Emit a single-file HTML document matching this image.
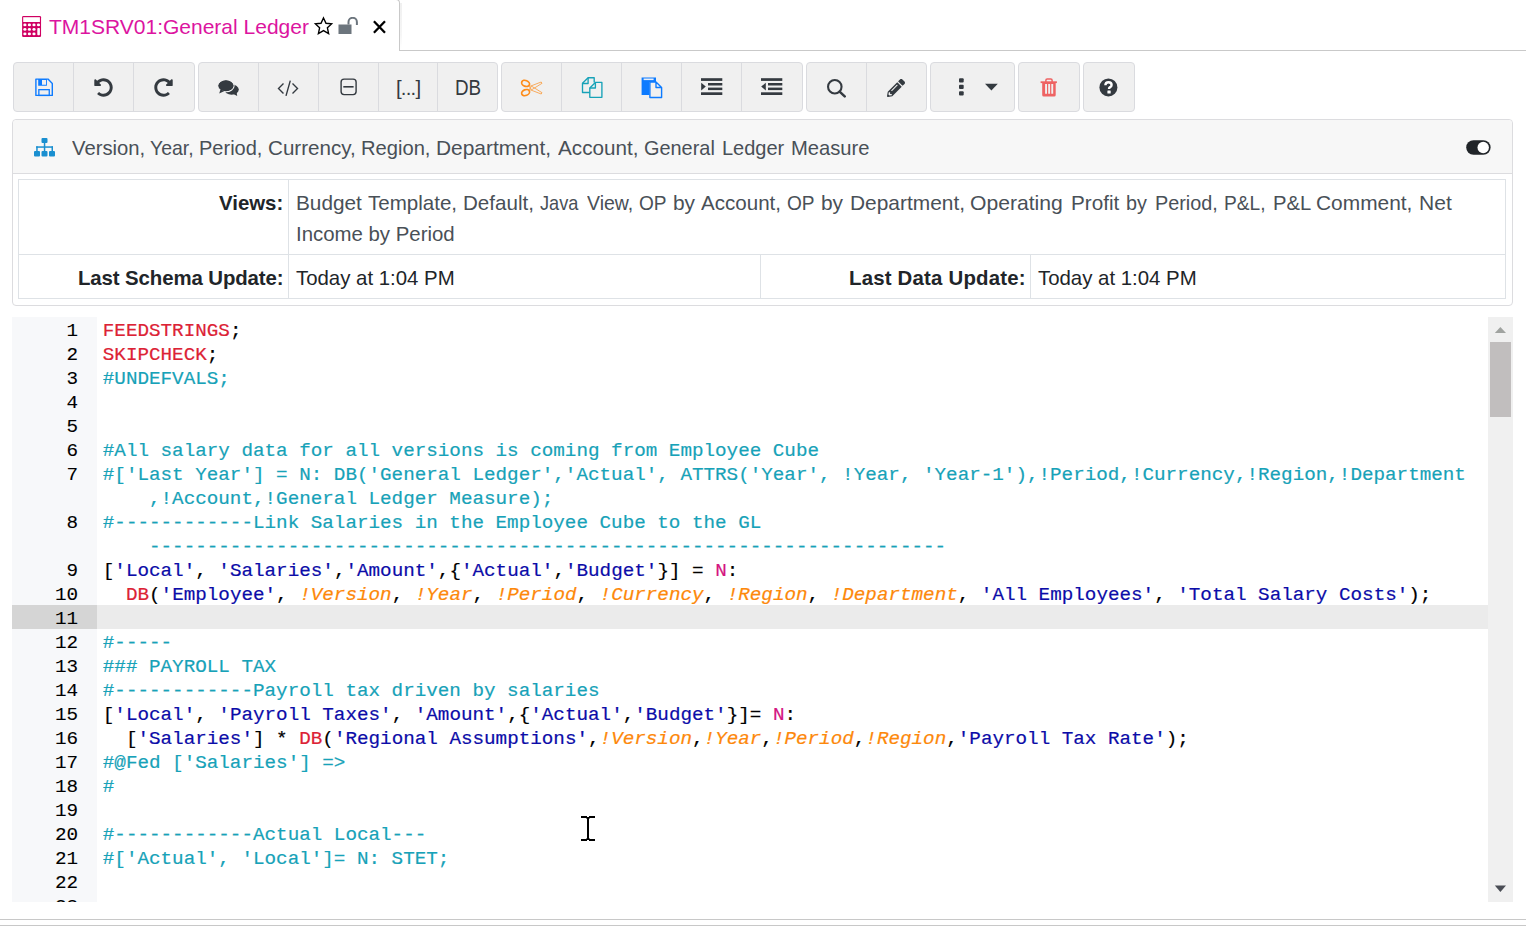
<!DOCTYPE html>
<html><head><meta charset="utf-8">
<style>
html,body{margin:0;padding:0;background:#fff;}
body{width:1526px;height:926px;overflow:hidden;position:relative;font-family:"Liberation Sans",sans-serif;}
.a{position:absolute;}
.t{position:absolute;white-space:pre;line-height:24px;}
.hw{font-size:20.4px;color:#495057;transform-origin:0 0;}
/* tab */
#tab{left:-10px;top:-1px;width:408px;height:51px;border:1px solid #c9c9c9;border-bottom:none;border-radius:0 4px 0 0;background:#fff;}
#tabline{left:399px;top:50px;width:1127px;height:1px;background:#c9c9c9;}
/* toolbar */
.grp{position:absolute;top:62px;height:48px;border:1px solid #dadbdf;border-radius:4px;background:#f0f0f0;}
.sep{position:absolute;top:63px;width:1px;height:48px;background:#dadbdf;}
/* panel */
#panel{left:12px;top:119px;width:1499px;height:185px;border:1px solid #dcdcdf;border-radius:4px;background:#fff;}
#phead{left:13px;top:120px;width:1499px;height:53px;background:#f7f7f7;border-bottom:1px solid #dcdcdf;border-radius:4px 4px 0 0;}
.tl{position:absolute;background:#dee2e6;}
/* editor */
#gutter{left:12px;top:317px;width:85px;height:585px;background:#f7f8fa;}
#hl{left:97px;top:605px;width:1391px;height:24px;background:#ebebeb;}
#hlg{left:12px;top:605px;width:85px;height:24px;background:#d5d5d5;}
#code{-webkit-text-stroke:0.2px currentColor;left:102.8px;top:319px;width:1385px;height:583px;overflow:hidden;font-family:"Liberation Mono",monospace;font-size:19.25px;line-height:24px;white-space:pre;color:#000;}
#nums{-webkit-text-stroke:0.1px currentColor;left:12px;top:319px;width:66px;height:583px;overflow:hidden;font-family:"Liberation Mono",monospace;font-size:19.25px;line-height:24px;white-space:pre;color:#000;text-align:right;}
.k{color:#dc2235;}
.c{color:#17a2b8;}
.s{color:#0c0ca8;}
.v{color:#fd880a;font-style:italic;}
.n{color:#d4157f;}
#sb{left:1488px;top:317px;width:25px;height:585px;background:#f0f0f0;}
#thumb{left:1490px;top:342px;width:21px;height:75px;background:#c1bebe;}
#bot1{left:0;top:919px;width:1526px;height:1px;background:#c8c8c8;}
#bot2{left:0;top:925px;width:1526px;height:1px;background:#c8c8c8;}
</style></head><body>

<!-- TAB -->
<div id="tab" class="a"></div>
<div id="tabline" class="a"></div>
<div class="a" style="left:400px;top:3px;width:2px;height:46px;background:linear-gradient(#f0f0f0,#f6f6f6 70%,#fff);"></div>
<svg class="a" style="left:19px;top:13px" width="26" height="26" viewBox="0 0 26 26">
  <rect x="3.1" y="2.95" width="18.95" height="20.95" rx="1.2" fill="#cf0062"/>
  <rect x="4.2" y="4.2" width="16.7" height="4.8" fill="#fff"/>
  <g fill="#fff"><ellipse cx="5.9" cy="11.9" rx="1.6" ry="1.45"/><ellipse cx="10.4" cy="11.9" rx="1.6" ry="1.45"/><ellipse cx="15.0" cy="11.9" rx="1.6" ry="1.45"/><ellipse cx="19.5" cy="11.9" rx="1.6" ry="1.45"/><ellipse cx="5.9" cy="16.4" rx="1.6" ry="1.45"/><ellipse cx="10.4" cy="16.4" rx="1.6" ry="1.45"/><ellipse cx="15.0" cy="16.4" rx="1.6" ry="1.45"/><ellipse cx="5.9" cy="20.9" rx="1.6" ry="1.45"/><ellipse cx="10.4" cy="20.9" rx="1.6" ry="1.45"/><ellipse cx="15.0" cy="20.9" rx="1.6" ry="1.45"/><rect x="18.3" y="15" width="2.6" height="7.2" rx="0.8"/></g>
</svg>
<div class="t" style="left:49px;top:14.7px;font-size:21px;color:#dc14a0;">TM1SRV01:General Ledger</div>
<svg class="a" style="left:313px;top:16px" width="21" height="20" viewBox="0 0 21 20">
  <path d="M10.5 2 L13 7.3 L18.6 7.9 L14.4 11.8 L15.6 17.5 L10.5 14.6 L5.4 17.5 L6.6 11.8 L2.4 7.9 L8 7.3 Z" fill="none" stroke="#000" stroke-width="1.4" stroke-linejoin="miter"/>
</svg>
<svg class="a" style="left:338px;top:17px" width="21" height="18" viewBox="0 0 21 18">
  <rect x="0.5" y="7.5" width="13" height="9.5" fill="#6c757d"/>
  <path d="M10.5 7.5 V5 A4.2 4.2 0 0 1 18.9 5 V8" fill="none" stroke="#6c757d" stroke-width="2"/>
</svg>
<svg class="a" style="left:372px;top:20px" width="15" height="15" viewBox="0 0 15 15">
  <path d="M1.9 1.3 L13 12.8 M13 1.3 L1.9 12.8" stroke="#000" stroke-width="2.3" stroke-linecap="butt"/>
</svg>

<!-- TOOLBAR -->
<div class="grp" style="left:13px;width:180px;"></div>
<div class="sep" style="left:73px"></div><div class="sep" style="left:133px"></div>
<div class="grp" style="left:198px;width:298px;"></div>
<div class="sep" style="left:258px"></div><div class="sep" style="left:318px"></div><div class="sep" style="left:378px"></div><div class="sep" style="left:437px"></div>
<div class="grp" style="left:501px;width:300px;"></div>
<div class="sep" style="left:561px"></div><div class="sep" style="left:621px"></div><div class="sep" style="left:681px"></div><div class="sep" style="left:741px"></div>
<div class="grp" style="left:806px;width:119px;"></div>
<div class="sep" style="left:866px"></div>
<div class="grp" style="left:930px;width:83px;"></div>
<div class="grp" style="left:1018px;width:60px;"></div>
<div class="grp" style="left:1083px;width:50px;"></div>

<!-- icons -->
<!-- save -->
<svg class="a" style="left:32px;top:75px" width="24" height="24" viewBox="0 0 24 24">
  <path d="M3.9 4.1 H16 L20.3 8.4 V20.4 H3.9 Z" fill="none" stroke="#0d7bff" stroke-width="1.4" stroke-linejoin="round"/>
  <path d="M6.2 4.1 H14.9 V10.8 H6.2 Z M10 4.9 V9.7 H14 V4.9 Z" fill="#0d7bff" fill-rule="evenodd"/>
  <rect x="6.85" y="14.65" width="10.4" height="5.8" fill="none" stroke="#0d7bff" stroke-width="1.3"/>
</svg>
<!-- undo -->
<svg class="a" style="left:94px;top:78px" width="19" height="19" viewBox="0 0 512 512">
  <path fill="#343a40" d="M255.545 8c-66.269.119-126.438 26.233-170.86 68.685L48.971 40.971C33.851 25.851 8 36.559 8 57.941V192c0 13.255 10.745 24 24 24h134.059c21.382 0 32.09-25.851 16.971-40.971l-41.75-41.75c30.864-28.899 70.801-44.907 113.23-45.273 92.398-.798 170.283 73.977 169.484 169.442C423.236 348.009 349.816 424 256 424c-41.127 0-79.997-14.678-110.63-41.556-4.743-4.161-11.906-3.908-16.368.553L89.34 422.659c-4.872 4.872-4.631 12.815.482 17.433C133.798 479.813 192.074 504 256 504c136.966 0 247.999-111.033 248-247.998C504.001 119.193 392.354 7.755 255.545 8z"/>
</svg>
<!-- redo -->
<svg class="a" style="left:154px;top:78px" width="19" height="19" viewBox="0 0 512 512">
  <path fill="#343a40" transform="translate(512 0) scale(-1 1)" d="M255.545 8c-66.269.119-126.438 26.233-170.86 68.685L48.971 40.971C33.851 25.851 8 36.559 8 57.941V192c0 13.255 10.745 24 24 24h134.059c21.382 0 32.09-25.851 16.971-40.971l-41.75-41.75c30.864-28.899 70.801-44.907 113.23-45.273 92.398-.798 170.283 73.977 169.484 169.442C423.236 348.009 349.816 424 256 424c-41.127 0-79.997-14.678-110.63-41.556-4.743-4.161-11.906-3.908-16.368.553L89.34 422.659c-4.872 4.872-4.631 12.815.482 17.433C133.798 479.813 192.074 504 256 504c136.966 0 247.999-111.033 248-247.998C504.001 119.193 392.354 7.755 255.545 8z"/>
</svg>
<!-- comments -->
<svg class="a" style="left:214px;top:76px" width="28" height="24" viewBox="0 0 28 24">
  <g fill="#343a40">
    <ellipse cx="17.6" cy="13.6" rx="7.2" ry="5.1"/>
    <path d="M18.5 17.5 L23.2 20.1 L22.6 16 Z"/>
  </g>
  <ellipse cx="11.95" cy="9.75" rx="8.05" ry="5.85" fill="#343a40" stroke="#f0f0f0" stroke-width="1.3"/>
  <path d="M6.5 13.5 L5.2 17.4 L10.5 15 Z" fill="#343a40"/>
  <ellipse cx="11.95" cy="9.75" rx="7.6" ry="5.4" fill="#343a40"/>
</svg>
<!-- code -->
<svg class="a" style="left:277px;top:80px" width="22" height="17" viewBox="0 0 22 17">
  <path d="M6.5 3.5 L1.5 8.5 L6.5 13.5 M15.5 3.5 L20.5 8.5 L15.5 13.5 M13.3 0.6 L9 15.9" fill="none" stroke="#343a40" stroke-width="1.4"/>
</svg>
<!-- minus square -->
<svg class="a" style="left:340px;top:78px" width="18" height="18" viewBox="0 0 18 18">
  <rect x="1.1" y="1.1" width="15" height="15.5" rx="3" fill="none" stroke="#343a40" stroke-width="1.4"/>
  <rect x="3.3" y="8" width="10.3" height="1.6" fill="#343a40"/>
</svg>
<div class="t" style="left:396px;top:76px;font-size:20.4px;color:#343a40;letter-spacing:-0.8px;">[...]</div>
<div class="t" style="left:455px;top:76px;font-size:21.4px;color:#343a40;transform:scaleX(0.88);transform-origin:0 0;">DB</div>
<!-- scissors -->
<svg class="a" style="left:516px;top:74px" width="30" height="26" viewBox="0 0 30 26">
  <g fill="none" stroke="#fd8c1a" stroke-width="1.7">
    <ellipse cx="9.6" cy="9.4" rx="4.1" ry="2.9" transform="rotate(22 9.6 9.4)"/>
    <ellipse cx="9.6" cy="18.6" rx="4.1" ry="2.9" transform="rotate(-22 9.6 18.6)"/>
  </g>
  <g fill="none" stroke="#fd8c1a" stroke-width="0.8" stroke-linejoin="round" opacity="0.85">
    <path d="M13.3 12.6 L25.2 8 L26 9.3 L15.6 15.8 Z"/>
    <path d="M13.3 15.4 L25.2 20 L26 18.7 L15.6 12.2 Z"/>
  </g>
</svg>
<!-- copy -->
<svg class="a" style="left:578px;top:74px" width="28" height="26" viewBox="0 0 28 26">
  <g fill="none" stroke="#17a2b8" stroke-width="1.35" stroke-linejoin="round">
    <path d="M11.8 18.5 H4.5 V9.3 L10.1 3.7 H16.2 V8.4"/>
    <path d="M10.1 3.7 V9.5 H4.5"/>
    <path d="M16.6 8.4 H23.9 V23.3 H11.8 V14 L17.4 8.4"/>
    <path d="M17.4 8.6 V14 H11.8"/>
  </g>
</svg>
<!-- paste -->
<svg class="a" style="left:641px;top:77px" width="22" height="22" viewBox="0 0 22 22">
  <path d="M0.6 0.5 H15 V5 H8.5 V18 H0.6 Z" fill="#0d7bff"/>
  <rect x="2.6" y="1.5" width="10" height="1.6" fill="#e8eef8"/>
  <path d="M8.9 5 H15 L20.6 10.5 V20.5 H8.9 Z M15 5 V10.5 H20.6" fill="#f0f0f0" stroke="#0d7bff" stroke-width="1.4" stroke-linejoin="round"/>
</svg>
<!-- indent -->
<svg class="a" style="left:701px;top:78px" width="22" height="18" viewBox="0 0 22 18">
  <g fill="#343a40"><rect x="0" y="0.2" width="21.3" height="2.7"/><rect x="7" y="5" width="14.3" height="2.5"/><rect x="7" y="9.6" width="14.3" height="2.5"/><rect x="0" y="14.3" width="21.3" height="2.7"/>
  <path d="M0.2 4.8 L4.8 8.6 L0.2 12.4 Z"/></g>
</svg>
<!-- outdent -->
<svg class="a" style="left:761px;top:78px" width="22" height="18" viewBox="0 0 22 18">
  <g fill="#343a40"><rect x="0" y="0.2" width="21.3" height="2.7"/><rect x="7" y="5" width="14.3" height="2.5"/><rect x="7" y="9.6" width="14.3" height="2.5"/><rect x="0" y="14.3" width="21.3" height="2.7"/>
  <path d="M4.8 4.8 L0.2 8.6 L4.8 12.4 Z"/></g>
</svg>
<!-- search -->
<svg class="a" style="left:826px;top:78px" width="21" height="20" viewBox="0 0 21 20">
  <circle cx="8.8" cy="8.8" r="6.75" fill="none" stroke="#343a40" stroke-width="2.1"/>
  <path d="M13.6 13.6 L18.7 18.4" stroke="#343a40" stroke-width="2.5" stroke-linecap="round"/>
</svg>
<!-- pencil -->
<svg class="a" style="left:887px;top:79px" width="18" height="18" viewBox="0 0 512 512">
  <path fill="#343a40" d="M497.9 142.1l-46.1 46.1c-4.7 4.7-12.3 4.7-17 0l-111-111c-4.7-4.7-4.7-12.3 0-17l46.1-46.1c18.7-18.7 49.1-18.7 67.9 0l60.1 60.1c18.8 18.7 18.8 49.1 0 67.9zM284.2 99.8L21.6 362.4.4 483.9c-2.9 16.4 11.4 30.6 27.8 27.8l121.5-21.3 262.6-262.6c4.7-4.7 4.7-12.3 0-17l-111-111c-4.8-4.7-12.4-4.7-17.1 0zM124.1 339.9c-5.5-5.5-5.5-14.3 0-19.8l154-154c5.5-5.5 14.3-5.5 19.8 0s5.5 14.3 0 19.8l-154 154c-5.5 5.5-14.3 5.5-19.8 0zM88 424h48v36.3l-64.5 11.3-31.1-31.1L51.7 376H88v48z"/>
</svg>
<!-- ellipsis v -->
<svg class="a" style="left:958px;top:78px" width="7" height="18" viewBox="0 0 7 18">
  <g fill="#343a40"><rect x="1" y="0.3" width="4.7" height="4.3" rx="1"/><rect x="1" y="6.8" width="4.7" height="4.3" rx="1"/><rect x="1" y="13.2" width="4.7" height="4.3" rx="1"/></g>
</svg>
<svg class="a" style="left:985px;top:83px" width="13" height="8" viewBox="0 0 13 8">
  <path d="M0 0.8 H12.8 L6.4 7.4 Z" fill="#343a40"/>
</svg>
<!-- trash -->
<svg class="a" style="left:1036px;top:74px" width="26" height="26" viewBox="0 0 26 26">
  <path d="M9.9 8.2 V6.2 Q9.9 4.9 11.2 4.9 H14.8 Q16.1 4.9 16.1 6.2 V8.2" fill="none" stroke="#ee6363" stroke-width="1.5"/>
  <rect x="4.6" y="7.3" width="16.3" height="1.8" fill="#ee6363"/>
  <path fill="#ee6363" fill-rule="evenodd" d="M6.2 9 H19.7 V21 Q19.7 22.5 18.2 22.5 H7.7 Q6.2 22.5 6.2 21 Z M9.1 10.1 V19.7 H11 V10.1 Z M12.2 10.1 V19.7 H14.1 V10.1 Z M15.3 10.1 V19.7 H17.2 V10.1 Z"/>
</svg>
<!-- help -->
<svg class="a" style="left:1099px;top:78px" width="19" height="19" viewBox="0 0 19 19">
  <circle cx="9.4" cy="9.4" r="9" fill="#343a40"/>
  <path d="M6.4 7.3 Q6.4 4.2 9.5 4.2 Q12.6 4.2 12.6 6.9 Q12.6 8.5 10.8 9.4 Q10.1 9.8 10.1 10.6 V11" fill="none" stroke="#fff" stroke-width="2.4" stroke-linejoin="round"/>
  <rect x="8.4" y="12.6" width="3.3" height="2.9" rx="0.5" fill="#fff"/>
</svg>

<!-- PANEL -->
<div id="panel" class="a"></div>
<div id="phead" class="a"></div>
<svg class="a" style="left:34px;top:138px" width="22" height="19" viewBox="0 0 22 19">
  <g fill="#1a8fd0">
    <rect x="7.5" y="0" width="6" height="5" rx="1"/>
    <rect x="0" y="13" width="6" height="5.5" rx="1"/><rect x="7.5" y="13" width="6" height="5.5" rx="1"/><rect x="15" y="13" width="6" height="5.5" rx="1"/>
    <rect x="9.8" y="4" width="1.5" height="9.5"/>
    <rect x="2.2" y="8.3" width="16.8" height="1.5"/>
    <rect x="2.2" y="8.3" width="1.5" height="5.2"/><rect x="17.5" y="8.3" width="1.5" height="5.2"/>
  </g>
</svg>
<div class="t hw" style="left:71.5px;top:136px;transform:scaleX(0.994)">Version,</div>
<div class="t hw" style="left:149.9px;top:136px;transform:scaleX(0.955)">Year,</div>
<div class="t hw" style="left:199.3px;top:136px;transform:scaleX(0.981)">Period,</div>
<div class="t hw" style="left:268.0px;top:136px;transform:scaleX(1.011)">Currency,</div>
<div class="t hw" style="left:360.8px;top:136px;transform:scaleX(0.988)">Region,</div>
<div class="t hw" style="left:436.3px;top:136px;transform:scaleX(1.025)">Department,</div>
<div class="t hw" style="left:557.5px;top:136px;transform:scaleX(1.014)">Account,</div>
<div class="t hw" style="left:643.5px;top:136px;transform:scaleX(0.976)">General</div>
<div class="t hw" style="left:721.7px;top:136px;transform:scaleX(0.981)">Ledger</div>
<div class="t hw" style="left:790.9px;top:136px;transform:scaleX(0.990)">Measure</div>
<svg class="a" style="left:1466px;top:140px" width="25" height="15" viewBox="0 0 25 15">
  <rect x="0.2" y="0.2" width="24.4" height="14.6" rx="7.3" fill="#212529"/>
  <circle cx="17.2" cy="7.5" r="5.7" fill="#fff"/>
</svg>

<!-- table -->
<div class="tl" style="left:18px;top:179px;width:1488px;height:1px"></div>
<div class="tl" style="left:18px;top:254px;width:1488px;height:1px"></div>
<div class="tl" style="left:18px;top:298px;width:1488px;height:1px"></div>
<div class="tl" style="left:18px;top:179px;width:1px;height:120px"></div>
<div class="tl" style="left:1505px;top:179px;width:1px;height:120px"></div>
<div class="tl" style="left:288px;top:179px;width:1px;height:120px"></div>
<div class="tl" style="left:760px;top:254px;width:1px;height:45px"></div>
<div class="tl" style="left:1030px;top:254px;width:1px;height:45px"></div>

<div class="t" style="left:219px;top:191px;font-size:20.4px;font-weight:bold;color:#212529;">Views:</div>
<div class="t hw" style="left:296.1px;top:191px;transform:scaleX(1.019)">Budget</div>
<div class="t hw" style="left:368.1px;top:191px;transform:scaleX(1.007)">Template,</div>
<div class="t hw" style="left:463.1px;top:191px;transform:scaleX(1.010)">Default,</div>
<div class="t hw" style="left:539.6px;top:191px;transform:scaleX(0.891)">Java</div>
<div class="t hw" style="left:587.3px;top:191px;transform:scaleX(0.955)">View,</div>
<div class="t hw" style="left:639.1px;top:191px;transform:scaleX(0.936)">OP</div>
<div class="t hw" style="left:672.5px;top:191px;transform:scaleX(1.024)">by</div>
<div class="t hw" style="left:701.3px;top:191px;transform:scaleX(1.009)">Account,</div>
<div class="t hw" style="left:787.3px;top:191px;transform:scaleX(0.936)">OP</div>
<div class="t hw" style="left:820.9px;top:191px;transform:scaleX(1.024)">by</div>
<div class="t hw" style="left:849.8px;top:191px;transform:scaleX(1.025)">Department,</div>
<div class="t hw" style="left:970.4px;top:191px;transform:scaleX(1.036)">Operating</div>
<div class="t hw" style="left:1071.1px;top:191px;transform:scaleX(1.015)">Profit</div>
<div class="t hw" style="left:1126.2px;top:191px;transform:scaleX(0.971)">by</div>
<div class="t hw" style="left:1155.0px;top:191px;transform:scaleX(0.973)">Period,</div>
<div class="t hw" style="left:1224.3px;top:191px;transform:scaleX(0.938)">P&amp;L,</div>
<div class="t hw" style="left:1272.5px;top:191px;transform:scaleX(0.992)">P&amp;L</div>
<div class="t hw" style="left:1316.0px;top:191px;transform:scaleX(1.025)">Comment,</div>
<div class="t hw" style="left:1418.6px;top:191px;transform:scaleX(1.032)">Net</div>
<div class="t" style="left:296px;top:222px;font-size:20.4px;color:#495057;">Income by Period</div>
<div class="t" style="left:78px;top:266px;font-size:20.4px;font-weight:bold;color:#212529;letter-spacing:-0.1px;">Last Schema Update:</div>
<div class="t" style="left:296px;top:266px;font-size:20.4px;color:#212529;">Today at 1:04 PM</div>
<div class="t" style="left:849px;top:266px;font-size:20.4px;font-weight:bold;color:#212529;letter-spacing:0.2px;">Last Data Update:</div>
<div class="t" style="left:1038px;top:266px;font-size:20.4px;color:#212529;">Today at 1:04 PM</div>

<!-- EDITOR -->
<div id="gutter" class="a"></div>
<div id="hlg" class="a"></div>
<div id="hl" class="a"></div>
<div id="nums" class="a">1
2
3
4
5
6
7

8

9
10
11
12
13
14
15
16
17
18
19
20
21
22
23</div>
<div id="code" class="a"><span class="k">FEEDSTRINGS</span>;
<span class="k">SKIPCHECK</span>;
<span class="c">#UNDEFVALS;</span>


<span class="c">#All salary data for all versions is coming from Employee Cube</span>
<span class="c">#['Last Year'] = N: DB('General Ledger','Actual', ATTRS('Year', !Year, 'Year-1'),!Period,!Currency,!Region,!Department</span>
<span class="c">    ,!Account,!General Ledger Measure);</span>
<span class="c">#------------Link Salaries in the Employee Cube to the GL</span>
<span class="c">    ---------------------------------------------------------------------</span>
[<span class="s">'Local'</span>, <span class="s">'Salaries'</span>,<span class="s">'Amount'</span>,{<span class="s">'Actual'</span>,<span class="s">'Budget'</span>}] = <span class="n">N</span>:
  <span class="k">DB</span>(<span class="s">'Employee'</span>, <span class="v">!Version</span>, <span class="v">!Year</span>, <span class="v">!Period</span>, <span class="v">!Currency</span>, <span class="v">!Region</span>, <span class="v">!Department</span>, <span class="s">'All Employees'</span>, <span class="s">'Total Salary Costs'</span>);

<span class="c">#-----</span>
<span class="c">### PAYROLL TAX</span>
<span class="c">#------------Payroll tax driven by salaries</span>
[<span class="s">'Local'</span>, <span class="s">'Payroll Taxes'</span>, <span class="s">'Amount'</span>,{<span class="s">'Actual'</span>,<span class="s">'Budget'</span>}]= <span class="n">N</span>:
  [<span class="s">'Salaries'</span>] * <span class="k">DB</span>(<span class="s">'Regional Assumptions'</span>,<span class="v">!Version</span>,<span class="v">!Year</span>,<span class="v">!Period</span>,<span class="v">!Region</span>,<span class="s">'Payroll Tax Rate'</span>);
<span class="c">#@Fed ['Salaries'] =&gt;</span>
<span class="c">#</span>

<span class="c">#------------Actual Local---</span>
<span class="c">#['Actual', 'Local']= N: STET;</span>

</div>
<div id="sb" class="a"></div>
<svg class="a" style="left:1494px;top:326px" width="13" height="8" viewBox="0 0 13 8"><path d="M0.8 7 L6.4 1 L12 7 Z" fill="#a0a3a0"/></svg>
<div id="thumb" class="a"></div>
<svg class="a" style="left:1494px;top:885px" width="13" height="8" viewBox="0 0 13 8"><path d="M0.8 0.6 L6.4 7 L12 0.6 Z" fill="#4a4d55"/></svg>

<!-- I-beam cursor -->
<svg class="a" style="left:579px;top:814px" width="18" height="29" viewBox="0 0 18 29">
  <g fill="#000"><rect x="2" y="2" width="6" height="2"/><rect x="10" y="2" width="6" height="2"/><rect x="8" y="3" width="2" height="23"/><rect x="2" y="25" width="6" height="2"/><rect x="10" y="25" width="6" height="2"/>
  <rect x="7.5" y="4" width="3" height="1"/><rect x="7.5" y="24" width="3" height="1"/></g>
</svg>

<div id="bot1" class="a"></div>
<div id="bot2" class="a"></div>
</body></html>
